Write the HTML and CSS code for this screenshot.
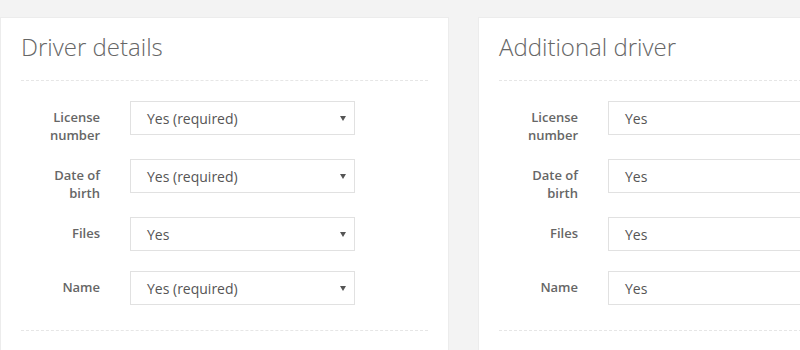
FILE: index.html
```html
<!DOCTYPE html>
<html>
<head>
<meta charset="utf-8">
<link rel="stylesheet" href="styles.css">
</head>
<body>
<div class="page">
  <section class="panel panel-main">
    <h2 class="panel-title">Driver details</h2>
    <div class="divider"></div>
    <div class="form">
      <div class="row"><label class="lbl">License number</label><div class="select">Yes (required)<span class="caret"></span></div></div>
      <div class="row"><label class="lbl">Date of birth</label><div class="select">Yes (required)<span class="caret"></span></div></div>
      <div class="row"><label class="lbl">Files</label><div class="select">Yes<span class="caret"></span></div></div>
      <div class="row"><label class="lbl">Name</label><div class="select">Yes (required)<span class="caret"></span></div></div>
    </div>
    <div class="divider divider-bottom"></div>
  </section>
  <section class="panel panel-extra">
    <h2 class="panel-title">Additional driver</h2>
    <div class="divider"></div>
    <div class="form">
      <div class="row"><label class="lbl">License number</label><div class="select input">Yes</div></div>
      <div class="row"><label class="lbl">Date of birth</label><div class="select input">Yes</div></div>
      <div class="row"><label class="lbl">Files</label><div class="select input">Yes</div></div>
      <div class="row"><label class="lbl">Name</label><div class="select input">Yes</div></div>
    </div>
    <div class="divider divider-bottom"></div>
  </section>
</div>
</body>
</html>
```
FILE: styles.css
```css
html, body {
  margin: 0;
  padding: 0;
  background: #f3f3f3;
  overflow: hidden;
  font-family: "Open Sans", "Liberation Sans", sans-serif;
}
.page {
  display: flex;
  gap: 29px;
  padding-top: 17px;
  width: 1200px;
}
.panel {
  background: #fff;
  border: 1px solid #ececec;
  box-sizing: border-box;
  padding: 12px 20px 30px;
  flex-shrink: 0;
  height: 400px;
}
.panel-main { width: 449px; }
.panel-extra { width: 520px; }
.panel-title {
  margin: 0;
  font-size: 24px;
  font-weight: 300;
  color: #666;
  line-height: 34px;
}
.divider {
  border-top: 1px dashed #e6e6e6;
  margin-top: 16px;
  margin-bottom: 20px;
}
.form {
  padding-bottom: 1px;
}
.row {
  display: grid;
  grid-template-columns: 79px 225px;
  column-gap: 30px;
  align-items: start;
  min-height: 38px;
  margin-bottom: 16px;
}
.panel-extra .row { grid-template-columns: 79px 1fr; }
.row:last-child { margin-bottom: 0; }
.divider-bottom {
  margin-top: 20px;
}
.lbl {
  text-align: right;
  font-size: 13px;
  font-weight: 600;
  color: #666;
  line-height: 18px;
  padding-top: 7px;
  margin-bottom: -1px;
}
.select {
  position: relative;
  box-sizing: border-box;
  height: 34px;
  border: 1px solid #e1e1e1;
  padding: 1px 16px 0;
  font-size: 14px;
  line-height: 32px;
  color: #555;
}
.caret {
  position: absolute;
  right: 8px;
  top: 14px;
  width: 0;
  height: 0;
  border-left: 3px solid transparent;
  border-right: 3px solid transparent;
  border-top: 5px solid #555;
}
```
